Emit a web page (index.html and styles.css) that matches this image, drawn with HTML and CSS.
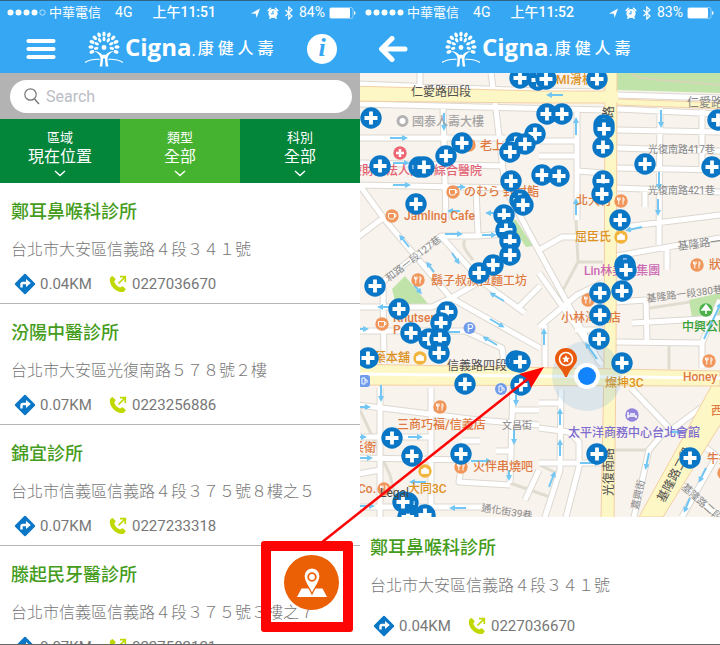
FILE: index.html
```
<!DOCTYPE html>
<html lang="zh-Hant">
<head>
    <meta charset="UTF-8">
    <meta name="viewport" content="width=device-width, initial-scale=1.0">
    <title>Cigna 康健人壽</title>
    <link rel="stylesheet" href="styles.css">
</head>
<body>
    <!-- shared icons -->
    <svg class="defs" width="0" height="0" aria-hidden="true">
        <defs>
            <ellipse id="leaf" cx="19" cy="3" rx="1.7" ry="2.6"/>
            <ellipse id="leaf-in" cx="19" cy="8" rx="1.5" ry="2.3"/>
            <symbol id="tree" viewBox="0 0 38 36">
                <g fill="#fff">
                    <use href="#leaf" transform="rotate(-112 19 16)"/>
                    <use href="#leaf" transform="rotate(-90 19 16)"/>
                    <use href="#leaf" transform="rotate(-67 19 16)"/>
                    <use href="#leaf" transform="rotate(-45 19 16)"/>
                    <use href="#leaf" transform="rotate(-22 19 16)"/>
                    <use href="#leaf"/>
                    <use href="#leaf" transform="rotate(22 19 16)"/>
                    <use href="#leaf" transform="rotate(45 19 16)"/>
                    <use href="#leaf" transform="rotate(67 19 16)"/>
                    <use href="#leaf" transform="rotate(90 19 16)"/>
                    <use href="#leaf" transform="rotate(112 19 16)"/>
                    <use href="#leaf-in" transform="rotate(-100 19 16)"/>
                    <use href="#leaf-in" transform="rotate(-66 19 16)"/>
                    <use href="#leaf-in" transform="rotate(-33 19 16)"/>
                    <use href="#leaf-in"/>
                    <use href="#leaf-in" transform="rotate(33 19 16)"/>
                    <use href="#leaf-in" transform="rotate(66 19 16)"/>
                    <use href="#leaf-in" transform="rotate(100 19 16)"/>
                    <circle cx="19" cy="16.500" r="2.400"/>
                    <path d="M9 20c3 0 6 1.500 8.500 4 .8-.5 2.200-.5 3 0 2.500-2.500 5.500-4 8.500-4-3.500 1.500-6 4-6.500 7 0 3 .2 6 .9 8.500h-2.600c-.5-2.500-.7-5-.8-8h-2c-.1 3-.3 5.500-.8 8h-2.600c.7-2.500.9-5.500.9-8.500-.5-3-3-5.500-6.500-7z"/>
                </g>
                <path d="M0 31.500c4-2.500 9-3.500 14.500-3.200M38 31.500c-4-2.500-9-3.500-14.500-3.200" fill="none" stroke="#fff" stroke-width="1.200"/>
            </symbol>
            <symbol id="status" viewBox="0 0 42 14">
                <path d="M0 7.500 9 2.500 5.500 12 4.800 7.800z" fill="#fff"/>
                <circle cx="22" cy="7.500" r="4.600" fill="#fff"/>
                <path d="M17.200 4.500 19.500 2.300M26.800 4.500 24.500 2.300M18.800 12.300l1-1.200M25.200 12.300l-1-1.200" stroke="#fff" stroke-width="1.500" stroke-linecap="round"/>
                <path d="M22 4.800V7.800H19.800" fill="none" stroke="#36a8f3" stroke-width="1.100"/>
                <path d="M34.500 4l6.500 6-3.200 3V1L41 4l-6.500 6" fill="none" stroke="#fff" stroke-width="1.200"/>
            </symbol>
            <symbol id="route" viewBox="0 0 22 22">
                <rect x="3.500" y="3.500" width="15" height="15" rx="1" fill="#0a76c6" transform="rotate(45 11 11)"/>
                <path d="M7.500 14.500v-3a1.500 1.500 0 0 1 1.500-1.500h4" fill="none" stroke="#fff" stroke-width="2.400"/>
                <path d="M12 6 16.800 10 12 14z" fill="#fff"/>
            </symbol>
            <symbol id="phone" viewBox="0 0 18 18">
                <path d="M3.500 1 6.200 3.500a1 1 0 0 1 .2 1.300L5.200 6.700c1 2.600 3 4.700 5.800 5.900l1.800-1.200a1 1 0 0 1 1.300.1l2.700 2.400c-.6 2-2.200 3.300-4.300 3.200C6 16.500.6 10.500.8 4.500.9 2.900 2 1.500 3.500 1z" fill="#bfd800"/>
                <path d="M9.500 8.500 16 2M11 1.700h5.300V7" fill="none" stroke="#bfd800" stroke-width="1.700"/>
            </symbol>
            <symbol id="chevron" viewBox="0 0 12 7">
                <path d="M1 1l5 4.500L11 1" fill="none" stroke="#fff" stroke-width="1.400"/>
            </symbol>
            <g id="clinic">
                <circle r="10.700" fill="#0a76c6"/>
                <path d="M-6.500 0h13M0-6.500v13" stroke="#fff" stroke-width="3.800"/>
            </g>
            <g id="food">
                <circle r="6.700" fill="#f0965a"/>
                <path d="M-2.200-3.500v7M-3.500-3.500v2.500h2.600v-2.500M2-3.500v7M2-3.500c1.500 1 1.500 3 0 4" fill="none" stroke="#fff"/>
            </g>
            <g id="cafe">
                <circle r="6.700" fill="#f0965a"/>
                <path d="M-3.500-2.500h6V1a2 2 0 0 1-2 2h-2a2 2 0 0 1-2-2zM2.500-1.500h1.500v2h-1.500" fill="none" stroke="#fff"/>
            </g>
            <g id="shop">
                <circle r="6.700" fill="#f1b43c"/>
                <path d="M-3.500-1.500h7v4h-7zM-1.500-1.500v-1.500h3v1.500" fill="#fff" stroke="#fff" stroke-width=".7"/>
            </g>
            <marker id="tip" viewBox="0 0 6 6" refX="3" refY="3" markerWidth="3" markerHeight="3" orient="auto">
                <path d="M0 0 6 3 0 6z" fill="#72c6f4"/>
            </marker>
        </defs>
    </svg>

    <main class="screens">
        <section class="screen list-screen">
            <header class="top">
                <div class="status">
                    <svg class="dots" viewBox="0 0 39 7">
                        <g fill="#fff"><circle cx="3.500" cy="3.500" r="3"/><circle cx="11.500" cy="3.500" r="3"/><circle cx="19.500" cy="3.500" r="3"/><circle cx="27.500" cy="3.500" r="3"/></g>
                        <circle cx="35.500" cy="3.500" r="2.700" fill="none" stroke="#fff" stroke-width=".6"/>
                    </svg>
                    <span class="carrier">中華電信</span>
                    <span class="network">4G</span>
                    <span class="time">上午11:51</span>
                    <svg class="status-icons"><use href="#status"/></svg>
                    <span class="percent">84%</span>
                    <svg class="battery" viewBox="0 0 27 12"><rect x=".5" y=".5" width="23.500" height="11" rx="2" fill="none" stroke="#fff" stroke-opacity=".6" stroke-width=".7"/><rect x="1" y="1" width="20" height="10" rx="1" fill="#fff"/><path d="M25 4v4c1-.5 1.500-1 1.500-2S26 4.500 25 4z" fill="#fff"/></svg>
                </div>
                <div class="bar">
                    <button class="icon-btn" type="button" aria-label="選單">
                        <svg width="30" height="22" viewBox="0 0 30 22"><path d="M2.500 3h25M2.500 11h25M2.500 19h25" stroke="#fff" stroke-width="4.200" stroke-linecap="round"/></svg>
                    </button>
                    <div class="logo">
                        <svg class="tree"><use href="#tree"/></svg>
                        <span class="brand">Cigna<small>.</small></span>
                        <span class="brand-zh">康 健 人 壽</span>
                    </div>
                    <button class="icon-btn info" type="button" aria-label="資訊">i</button>
                </div>
            </header>

            <form class="search">
                <div class="search-box">
                    <svg width="16" height="17" viewBox="0 0 16 17"><circle cx="6.500" cy="6.500" r="5.700" fill="none" stroke="#777" stroke-width="1.200"/><path d="M10.500 11 15 16" stroke="#777" stroke-width="1.400"/></svg>
                    <input type="search" placeholder="Search" aria-label="Search">
                </div>
            </form>

            <nav class="tabs">
                <button type="button"><small>區域</small><span>現在位置</span><svg><use href="#chevron"/></svg></button>
                <button type="button" class="active"><small>類型</small><span>全部</span><svg><use href="#chevron"/></svg></button>
                <button type="button"><small>科別</small><span>全部</span><svg><use href="#chevron"/></svg></button>
            </nav>

            <ul class="clinics">
                <li class="clinic">
                    <h2>鄭耳鼻喉科診所</h2>
                    <p>台北市大安區信義路４段３４１號</p>
                    <div class="meta">
                        <span class="distance"><svg class="route"><use href="#route"/></svg>0.04KM</span>
                        <a href="tel:0227036670"><svg class="phone"><use href="#phone"/></svg>0227036670</a>
                    </div>
                </li>
                <li class="clinic">
                    <h2>汾陽中醫診所</h2>
                    <p>台北市大安區光復南路５７８號２樓</p>
                    <div class="meta">
                        <span class="distance"><svg class="route"><use href="#route"/></svg>0.07KM</span>
                        <a href="tel:0223256886"><svg class="phone"><use href="#phone"/></svg>0223256886</a>
                    </div>
                </li>
                <li class="clinic">
                    <h2>錦宜診所</h2>
                    <p>台北市信義區信義路４段３７５號８樓之５</p>
                    <div class="meta">
                        <span class="distance"><svg class="route"><use href="#route"/></svg>0.07KM</span>
                        <a href="tel:0227233318"><svg class="phone"><use href="#phone"/></svg>0227233318</a>
                    </div>
                </li>
                <li class="clinic">
                    <h2>滕起民牙醫診所</h2>
                    <p>台北市信義區信義路４段３７５號３樓之７</p>
                    <div class="meta">
                        <span class="distance"><svg class="route"><use href="#route"/></svg>0.07KM</span>
                        <a href="tel:0227582121"><svg class="phone"><use href="#phone"/></svg>0227582121</a>
                    </div>
                </li>
            </ul>

            <div class="callout">
                <button class="fab" type="button" aria-label="地圖">
                    <svg width="32" height="30" viewBox="0 0 32 30">
                        <path d="M5.500 20.500h21L31 29H1z" fill="#fff"/>
                        <path d="M16 0a8 8 0 0 1 8 8C24 14 18.500 20 16 26 13.500 20 8 14 8 8A8 8 0 0 1 16 0z" fill="#fff" stroke="#eb5f05" stroke-width="1.200"/>
                        <circle cx="16" cy="9" r="3.800" fill="none" stroke="#eb5f05" stroke-width="1.800"/>
                    </svg>
                </button>
            </div>
        </section>

        <section class="screen map-screen">
            <header class="top">
                <div class="status">
                    <svg class="dots" viewBox="0 0 39 7">
                        <g fill="#fff"><circle cx="3.500" cy="3.500" r="3"/><circle cx="11.500" cy="3.500" r="3"/><circle cx="19.500" cy="3.500" r="3"/><circle cx="27.500" cy="3.500" r="3"/><circle cx="35.500" cy="3.500" r="3"/></g>
                    </svg>
                    <span class="carrier">中華電信</span>
                    <span class="network">4G</span>
                    <span class="time">上午11:52</span>
                    <svg class="status-icons"><use href="#status"/></svg>
                    <span class="percent">83%</span>
                    <svg class="battery" viewBox="0 0 27 12"><rect x=".5" y=".5" width="23.500" height="11" rx="2" fill="none" stroke="#fff" stroke-opacity=".6" stroke-width=".7"/><rect x="1" y="1" width="20" height="10" rx="1" fill="#fff"/><path d="M25 4v4c1-.5 1.500-1 1.500-2S26 4.500 25 4z" fill="#fff"/></svg>
                </div>
                <div class="bar">
                    <button class="icon-btn" type="button" aria-label="返回">
                        <svg width="30" height="26" viewBox="0 0 30 26"><path d="M14 2.500 3.500 13 14 23.500M4.500 13H27" fill="none" stroke="#fff" stroke-width="5" stroke-linecap="round" stroke-linejoin="round"/></svg>
                    </button>
                    <div class="logo">
                        <svg class="tree"><use href="#tree"/></svg>
                        <span class="brand">Cigna<small>.</small></span>
                        <span class="brand-zh">康 健 人 壽</span>
                    </div>
                </div>
            </header>

            <div class="map">
                <svg viewBox="360 73 360 444" preserveAspectRatio="xMidYMid slice" role="img" aria-label="診所地圖">
                    <rect x="300" y="0" width="500" height="600" fill="#f8f3ed"/>

                    <!-- parks -->
                    <g fill="#bfe3a8">
                        <path d="M617 73h103v20l-103-3z"/>
                        <path d="M392 289l13-13 24 29h-33z"/>
                        <path d="M508 220h8l17 26-7 1z"/>
                        <path d="M689 300l31-7v22l-28 2z"/>
                    </g>
                    <path d="M631 73c8 8 30 6 89 12" fill="none" stroke="#d9d5b8" stroke-width="2"/>

                    <!-- small lanes -->
                    <g fill="none" stroke="#e0ddd0" stroke-width="3">
                        <path d="M576 220l2 42-16 30M578 262h25M465 240c-4 6 2 12 8 20M360 410l30 65 8 35M614 450h35M669 343v26M650 308l40-6M540 465l20 10M510 483l40 14"/>
                    </g>

                    <!-- streets: grey edge first, white on top -->
                    <defs>
                        <path id="streets" d="M358 84l181 7 66 1M358 104l247 6M491 73l5 37 9 76M420 73v14M443 108l3 112M358 138h148M358 163l147 3M358 185l150 3M358 183l27 37 66 78 89 50M372 290l69-54h37l27-2M441 236l40 45 44 32M358 237l25-19M451 298l30-17 28-33M476 190l2 44M383 288l1 77M358 307h74l19-9M358 331h107l37 17 2 15M540 286l-22 22M505 188l35 65 60 110M577 108v112M539 141h38M539 156h38M577 171l28 2M617 95l103 3M617 109l103 5M617 130l103 2M617 148l103 3M617 168l103 2M617 188l103 4M660 108l-1 137M702 110v62M645 190v17M539 250l23-13h40M539 273l40 57 23 35M539 327l38-32 25-12M575 330h28M616 228l104-13M616 256l104-18M667 247v23M616 302l30-2 1 42M632 323l88-5M616 342l86 1v25M702 343l18-43M545 325v45M380 388v129M431 388v129M358 405l120 15 61 5M358 437h73M358 458l112 2M513 387l-3 96M512 410h27M496 451h15M462 441h18M461 467l-2 15 51 3M525 500l14-30M358 507h127M358 474l22-4M561 390l-1 80-15 47M539 403h22M539 428l30 4 10 10v25l-13 50M539 463h62M631 388l40 42 31-23M666 430l-17 20-15 67M690 435l30 24M716 457l-34 60M700 445l10-14M672 477l48 40"/>
                    </defs>
                    <g fill="none" stroke-linejoin="round">
                        <use href="#streets" stroke="#dcd8d1" stroke-width="7"/>
                        <use href="#streets" stroke="#fff" stroke-width="5"/>
                    </g>

                    <!-- main roads -->
                    <g fill="#fdf7c6" stroke="#f4cfa2" stroke-width="1">
                        <path d="M350 86l189 5h66v12h-66l-189-2z"/>
                        <path d="M617 99l110 4v6l-110-4z"/>
                        <path d="M725 385h-13l-73 132h24l62-100z"/>
                        <path d="M605 70h12l-1 300-2 150h-13l3-150z"/>
                        <path d="M350 364l370 7v15l-370-1z"/>
                    </g>
                    <path d="M604 91.500h14v11h-14zM603 369.500h14v16h-14z" fill="#fdf7c6"/>
                    <path d="M350 374l370 4" stroke="#fff" stroke-width="3"/>

                    <!-- one way arrows -->
                    <g class="oneway">
                        <path d="M390 138h15"/>
                        <path d="M393 163h14"/>
                        <path d="M393 185h15"/>
                        <path d="M563 95h-14"/>
                        <path d="M444 113v15"/>
                        <path d="M576 135v-15"/>
                        <path d="M661 110v15"/>
                        <path d="M659 172v15"/>
                        <path d="M658 199v14"/>
                        <path d="M576 215v-14"/>
                        <path d="M449 187h14"/>
                        <path d="M460 211h-10"/>
                        <path d="M500 213h-12"/>
                        <path d="M445 234h15"/>
                        <path d="M482 235h12"/>
                        <path d="M409 247l-8-10"/>
                        <path d="M434 272l-6-8"/>
                        <path d="M414 285l6 7"/>
                        <path d="M452 253l6 9"/>
                        <path d="M504 301l-12-7"/>
                        <path d="M490 319l12 7"/>
                        <path d="M497 345l-12-7"/>
                        <path d="M460 332h-14"/>
                        <path d="M390 307h-10"/>
                        <path d="M358 329h8"/>
                        <path d="M642 227l-14 3"/>
                        <path d="M704 339l16-34"/>
                        <path d="M544 345v-14"/>
                        <path d="M597 359l-10-14"/>
                        <path d="M381 385v14"/>
                        <path d="M360 407h8"/>
                        <path d="M408 437h12"/>
                        <path d="M358 437h6"/>
                        <path d="M358 458h12"/>
                        <path d="M471 461h18"/>
                        <path d="M426 482h-14"/>
                        <path d="M466 508h-14"/>
                        <path d="M516 395v8"/>
                        <path d="M514 430v12"/>
                        <path d="M509 470v8"/>
                        <path d="M560 425v-14"/>
                        <path d="M560 456v-14"/>
                        <path d="M549 487l5-13"/>
                        <path d="M649 453l-3 14"/>
                        <path d="M706 468l-6 12"/>
                        <path d="M690 498l-5 12"/>
                        <path d="M360 506h12"/>
                        <path d="M580 463h18"/>
                        <path d="M670 432h10"/>
                    </g>

                    <!-- road names -->
                    <g class="road">
                        <text x="411" y="96" class="dark">仁愛路四段</text>
                        <text x="447" y="370" class="dark">信義路四段</text>
                        <text class="dark" transform="translate(613 118) rotate(-90)">路</text>
                        <text class="dark" transform="translate(613 496) rotate(-90)">光復南路</text>
                        <text class="dark" transform="translate(664 503) rotate(-62)">基隆路二段</text>
                        <text x="687" y="107" class="mid">仁愛路四段</text>
                        <text x="648" y="153">光復南路417巷</text>
                        <text x="648" y="194">光復南路421巷</text>
                        <text class="wide" transform="translate(678 250) rotate(-7)">基隆路一段</text>
                        <text transform="translate(647 302) rotate(-7)">基隆路一段380巷</text>
                        <text transform="translate(389 282) rotate(-38)">和路一段127巷</text>
                        <text x="502" y="429">文昌街</text>
                        <text transform="translate(481 511) rotate(9)">通化街39巷</text>
                        <text transform="translate(638 510) rotate(-77)">嘉興街</text>
                        <text transform="translate(681 488) rotate(42)">基隆路二段</text>
                    </g>

                    <!-- places, icons first so the names stay readable -->
                    <circle cx="402.500" cy="121" r="4.500" fill="#fff" stroke="#b3b3b3" stroke-width="3"/>
                    <circle cx="400" cy="153" r="6.700" fill="#ee6673"/>
                    <path d="M396 153h8M400 149v8" stroke="#fff" stroke-width="2.500"/>
                    <use href="#food" x="469" y="145"/>
                    <use href="#cafe" x="453" y="192"/>
                    <use href="#cafe" x="392" y="216"/>
                    <use href="#food" x="621" y="201"/>
                    <use href="#shop" x="621" y="237"/>
                    <use href="#food" x="697" y="265"/>
                    <use href="#food" x="418" y="280"/>
                    <use href="#food" x="588" y="300"/>
                    <use href="#cafe" x="382" y="324"/>
                    <use href="#shop" x="420" y="358"/>
                    <use href="#food" x="709" y="361"/>
                    <use href="#food" x="440" y="407"/>
                    <use href="#food" x="461" y="467"/>
                    <use href="#shop" x="425" y="471"/>
                    <use href="#food" x="384" y="489"/>
                    <use href="#food" x="724" y="473"/>
                    <circle cx="706" cy="310" r="6.700" fill="#4bb04b"/>
                    <path d="M706 305l4 5h-8zM706 309v5" fill="#fff" stroke="#fff" stroke-width="1.500"/>
                    <circle cx="632" cy="415" r="6.700" fill="#9384dc"/>
                    <path d="M628 412v6M628 416h8v2M630 414h5" fill="none" stroke="#fff" stroke-width="1.500"/>
                    <g fill="#6f9bea">
                        <circle cx="469.500" cy="328" r="6"/>
                        <circle cx="501" cy="389" r="6"/>
                        <rect x="359" y="375" width="11" height="12" rx="3"/>
                    </g>
                    <text x="467" y="332" class="parking">P</text>
                    <g fill="none" stroke="#fff"><path d="M499 386h3v6h-3zM502 388h2v3"/><path d="M362 378h3v6h-3zM365 380h2v3"/></g>
                    <g class="poi">
                        <text x="412" y="126" class="grey">國泰人壽大樓</text>
                        <text x="556" y="84" class="gold">MI滑板</text>
                        <text x="480" y="150">老上海</text>
                        <text x="482" y="175" class="red">療財團法人國泰綜合醫院</text>
                        <text x="464" y="196">のむら 野村鮨</text>
                        <text x="404" y="220">Jamling Cafe</text>
                        <text x="576" y="205">北大行</text>
                        <text x="575" y="241" class="gold">屈臣氏</text>
                        <text x="584" y="275" class="pink">Lin林美髮集團</text>
                        <text x="709" y="269">狀元</text>
                        <text x="431" y="285">鬍子叔叔拉麵工坊</text>
                        <text x="393" y="322">Knutsen</text>
                        <text x="393" y="334">Pe</text>
                        <text x="374" y="362" class="gold">藥本舖</text>
                        <text x="561" y="322">小林海產店</text>
                        <text x="682" y="331" class="green">中興公園</text>
                        <text x="683" y="381">Honey B</text>
                        <text x="605" y="387" class="gold">燦坤3C</text>
                        <text x="397" y="429">三商巧福/信義店</text>
                        <text x="352" y="452">兵衛</text>
                        <text x="358" y="493">Co.</text>
                        <text x="408" y="493" class="gold">大同3C</text>
                        <text x="473" y="471">火伴串燒吧</text>
                        <text x="568" y="437" class="purple">太平洋商務中心台北會館</text>
                        <text x="711" y="415">西</text>
                        <text x="707" y="463">牛排</text>
                    </g>

                    <circle cx="587" cy="376" r="35" fill="#4a9bd6" fill-opacity=".16"/>

                    <!-- clinics -->
                    <use href="#clinic" x="538" y="80"/>
                    <use href="#clinic" x="520" y="78"/>
                    <use href="#clinic" x="546" y="79"/>
                    <use href="#clinic" x="597" y="79"/>
                    <use href="#clinic" x="371" y="118"/>
                    <use href="#clinic" x="547" y="114"/>
                    <use href="#clinic" x="562" y="114"/>
                    <use href="#clinic" x="718" y="120"/>
                    <use href="#clinic" x="604" y="125"/>
                    <use href="#clinic" x="604" y="129"/>
                    <use href="#clinic" x="603" y="147"/>
                    <use href="#clinic" x="535" y="134"/>
                    <use href="#clinic" x="516" y="143"/>
                    <use href="#clinic" x="525" y="144"/>
                    <use href="#clinic" x="510" y="152"/>
                    <use href="#clinic" x="462" y="143"/>
                    <use href="#clinic" x="446" y="156"/>
                    <use href="#clinic" x="380" y="166"/>
                    <use href="#clinic" x="419" y="167"/>
                    <use href="#clinic" x="424" y="167"/>
                    <use href="#clinic" x="645" y="164"/>
                    <use href="#clinic" x="712" y="167"/>
                    <use href="#clinic" x="511" y="181"/>
                    <use href="#clinic" x="542" y="175"/>
                    <use href="#clinic" x="559" y="176"/>
                    <use href="#clinic" x="603" y="181"/>
                    <use href="#clinic" x="602" y="194"/>
                    <use href="#clinic" x="416" y="204"/>
                    <use href="#clinic" x="520" y="200"/>
                    <use href="#clinic" x="523" y="205"/>
                    <use href="#clinic" x="504" y="215"/>
                    <use href="#clinic" x="620" y="220"/>
                    <use href="#clinic" x="506" y="230"/>
                    <use href="#clinic" x="510" y="241"/>
                    <use href="#clinic" x="510" y="255"/>
                    <use href="#clinic" x="493" y="265"/>
                    <use href="#clinic" x="479" y="273"/>
                    <use href="#clinic" x="375" y="286"/>
                    <use href="#clinic" x="625" y="265"/>
                    <use href="#clinic" x="626" y="270"/>
                    <use href="#clinic" x="622" y="291"/>
                    <use href="#clinic" x="600" y="293"/>
                    <use href="#clinic" x="600" y="315"/>
                    <use href="#clinic" x="599" y="339"/>
                    <use href="#clinic" x="622" y="363"/>
                    <use href="#clinic" x="399" y="309"/>
                    <use href="#clinic" x="447" y="312"/>
                    <use href="#clinic" x="441" y="323"/>
                    <use href="#clinic" x="411" y="333"/>
                    <use href="#clinic" x="429" y="339"/>
                    <use href="#clinic" x="440" y="339"/>
                    <use href="#clinic" x="439" y="353"/>
                    <use href="#clinic" x="368" y="358"/>
                    <use href="#clinic" x="516" y="361"/>
                    <use href="#clinic" x="520" y="362"/>
                    <use href="#clinic" x="465" y="384"/>
                    <use href="#clinic" x="521" y="385"/>
                    <use href="#clinic" x="392" y="438"/>
                    <use href="#clinic" x="412" y="456"/>
                    <use href="#clinic" x="461" y="454"/>
                    <use href="#clinic" x="597" y="454"/>
                    <use href="#clinic" x="690" y="458"/>
                    <use href="#clinic" x="408" y="517"/>
                    <use href="#clinic" x="408" y="503"/>
                    <use href="#clinic" x="403" y="502"/>
                    <use href="#clinic" x="425" y="515"/>
                    <text x="380" y="497" class="legal">Legal</text>

                    <!-- selected clinic and current position -->
                    <path d="M566 348a11 11 0 0 1 11 11c0 6-7 9-10 18h-2c-3-9-10-12-10-18a11 11 0 0 1 11-11z" fill="#e95a0c"/>
                    <circle cx="566" cy="359" r="6.500" fill="none" stroke="#fff" stroke-width="1.600"/>
                    <path d="M566 355l1.200 2.600 2.800.3-2.100 1.900.6 2.800-2.500-1.400-2.500 1.400.6-2.800-2.100-1.900 2.800-.3z" fill="#fff"/>
                    <circle cx="587" cy="376" r="13" fill="#fff"/>
                    <circle cx="587" cy="376" r="9" fill="#1283fb"/>
                </svg>
            </div>

            <article class="clinic detail">
                <h2>鄭耳鼻喉科診所</h2>
                <p>台北市大安區信義路４段３４１號</p>
                <div class="meta">
                    <span class="distance"><svg class="route"><use href="#route"/></svg>0.04KM</span>
                    <a href="tel:0227036670"><svg class="phone"><use href="#phone"/></svg>0227036670</a>
                </div>
            </article>
        </section>

        <svg class="pointer" viewBox="0 0 720 645" aria-hidden="true">
            <path d="M321 543 529 378" stroke="#fe0505" stroke-width="2.500"/>
            <path d="M544 367 531 388 528 379 519 374z" fill="#fe0505"/>
        </svg>
    </main>
</body>
</html>
```
FILE: styles.css
```
* {
    box-sizing: border-box;
}
body {
    margin: 0;
    font-family: Roboto, "Noto Sans CJK TC", sans-serif;
    color: #777;
    background-color: #fff;
}
button, input {
    font-family: inherit;
    border: 0;
    padding: 0;
    background: none;
}
.defs {
    position: absolute;
}
.screens {
    position: relative;
    display: grid;
    grid-template-columns: 1fr 1fr;
    height: 100vh;
    overflow: hidden;
    border-top: 1px solid #2f6488;
    border-bottom: 1px solid #666;
}
.screen {
    display: flex;
    flex-direction: column;
    min-width: 0;
    min-height: 0;
    position: relative;
    overflow: hidden;
}

/* header */
.top {
    flex: none;
    height: 72px;
    background-color: #36a8f3;
    color: #fff;
}
.status {
    display: flex;
    align-items: center;
    height: 23px;
    padding: 0 4px 0 7px;
    font-size: 13px;
    line-height: 23px;
    white-space: nowrap;
}
.map-screen .status {
    padding: 0 6px 0 5px;
}
.dots {
    width: 39px;
    height: 7px;
    margin-right: 3px;
}
.network {
    margin-left: 14px;
    font-size: 14px;
}
.time {
    margin-left: 20px;
    font-size: 14px;
    font-weight: 500;
}
.status-icons {
    width: 42px;
    height: 14px;
    margin-left: auto;
}
.percent {
    margin: 0 4px 0 6px;
    font-size: 14px;
}
.battery {
    width: 27px;
    height: 12px;
}
.bar {
    display: flex;
    align-items: center;
    height: 49px;
    padding: 0 23px 0 26px;
}
.map-screen .bar {
    padding-left: 18px;
}
.icon-btn {
    display: flex;
    flex: none;
    width: 30px;
    justify-content: center;
    color: #fff;
    cursor: pointer;
}
.info {
    height: 30px;
    border-radius: 50%;
    background-color: #fff;
    color: #36a8f3;
    font-family: "Liberation Serif", serif;
    font-size: 26px;
    font-weight: bold;
    font-style: italic;
    line-height: 28px;
}
.logo {
    display: flex;
    align-items: center;
    margin: 0 auto 0 29px;
}
.map-screen .logo {
    margin-left: 34px;
}
.tree {
    width: 38px;
    height: 36px;
    margin-right: 2px;
}
.brand {
    font-family: "Open Sans", sans-serif;
    font-size: 24px;
    font-weight: 700;
    line-height: 36px;
}
.brand small {
    font-size: 16px;
    font-weight: 400;
}
.brand-zh {
    margin-left: 2px;
    font-size: 16px;
    font-weight: 500;
    line-height: 36px;
    white-space: nowrap;
}

/* search */
.search {
    flex: none;
    padding: 7px 8px 6px 10px;
    background-color: #b3b3b4;
}
.search-box {
    display: flex;
    align-items: center;
    gap: 6px;
    height: 33px;
    padding-left: 14px;
    border-radius: 17px;
    background-color: #fff;
}
.search input {
    flex: 1;
    min-width: 0;
    font-size: 16px;
    outline: none;
}
.search input::placeholder {
    color: #bbbdc4;
}

/* filter tabs */
.tabs {
    flex: none;
    display: grid;
    grid-template-columns: 1fr 1fr 1fr;
}
.tabs button {
    display: flex;
    flex-direction: column;
    align-items: center;
    height: 64px;
    padding-top: 10px;
    background-color: #03853a;
    color: #fff;
    font-size: 16px;
    line-height: 20px;
    cursor: pointer;
}
.tabs .active {
    background-color: #45b32f;
}
.tabs small {
    font-size: 13px;
    line-height: 18px;
}
.tabs svg {
    width: 12px;
    height: 7px;
    margin-top: 3px;
}

/* clinic list */
.clinics {
    margin: 0;
    padding: 0;
    list-style: none;
}
.clinic {
    padding: 17px 12px 7px 11px;
}
.clinic + .clinic {
    border-top: 1px solid #b5b5b5;
}
.clinic h2 {
    margin: 0 0 14px;
    color: #459c1c;
    font-size: 18px;
    font-weight: 500;
    line-height: 24px;
}
.clinic p {
    margin: 0 0 10px;
    font-size: 16px;
    font-weight: 300;
    line-height: 24px;
    white-space: nowrap;
}
.meta {
    display: flex;
    padding-left: 3px;
    font-size: 15px;
    line-height: 24px;
}
.meta span, .meta a {
    display: flex;
    align-items: center;
    color: inherit;
    text-decoration: none;
}
.distance {
    width: 95px;
}
.route {
    width: 22px;
    height: 22px;
    margin-right: 4px;
}
.phone {
    width: 18px;
    height: 18px;
    margin-right: 5px;
}

/* map button with its frame */
.callout {
    position: absolute;
    right: 7px;
    bottom: 12px;
    padding: 4px;
    border: 10px solid #fe0505;
    border-radius: 3px;
}
.fab {
    display: flex;
    align-items: center;
    justify-content: center;
    width: 55px;
    height: 55px;
    margin: 0 0 8px 9px;
    border-radius: 50%;
    background-color: #eb5f05;
    cursor: pointer;
}
.pointer {
    position: absolute;
    inset: -1px 0;
    width: 100%;
    pointer-events: none;
}

/* map */
.map {
    flex: 1;
    min-height: 0;
}
.map svg {
    display: block;
    width: 100%;
    height: 100%;
}
.oneway path {
    stroke: #72c6f4;
    stroke-width: 2px;
    marker-end: url(#tip);
}
.road text {
    font-size: 10px;
    fill: #888;
}
.road .dark {
    font-size: 12px;
    fill: #505050;
}
.road .mid {
    font-size: 12px;
}
.road .wide {
    font-size: 11px;
}
.poi text {
    font-size: 12px;
    font-weight: 500;
    fill: #df7b42;
}
.poi .grey {
    fill: #a3a3a3;
}
.poi .gold {
    fill: #dd921f;
}
.poi .red {
    fill: #e26273;
    text-anchor: end;
}
.poi .pink {
    fill: #cc69b4;
}
.poi .green {
    fill: #35a035;
}
.poi .purple {
    fill: #7d6bd0;
}
.parking {
    font-size: 10px;
    fill: #fff;
}
.legal {
    font-size: 12px;
    fill: #444;
}
.detail {
    flex: none;
    padding: 19px 10px 6px;
}
.detail p {
    margin-bottom: 16px;
}
```
